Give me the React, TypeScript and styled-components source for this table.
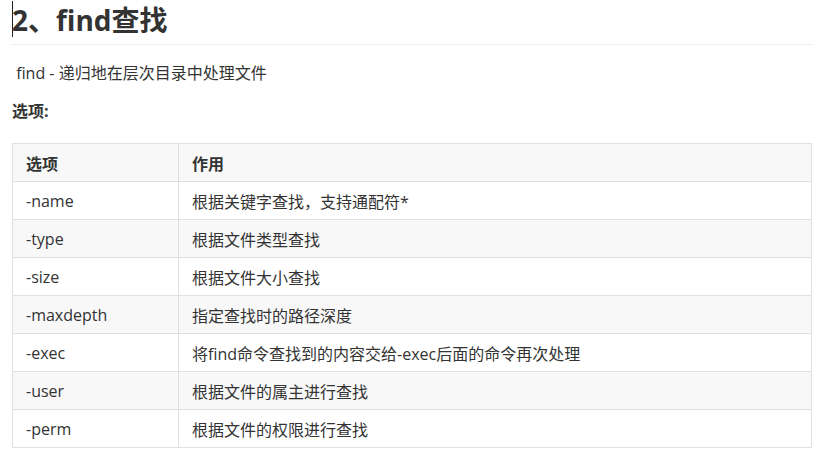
import React from "react";
import styled, { createGlobalStyle } from "styled-components";

const Global = createGlobalStyle`
  html, body {
    margin: 0;
    padding: 0;
    background: #ffffff;
  }
  body {
    font-family: "Open Sans", "Noto Sans CJK SC", sans-serif;
    color: #333333;
    font-size: 16px;
  }
`;

const rows = [
  { opt: "-name", desc: "根据关键字查找，支持通配符*" },
  { opt: "-type", desc: "根据文件类型查找" },
  { opt: "-size", desc: "根据文件大小查找" },
  { opt: "-maxdepth", desc: "指定查找时的路径深度" },
  { opt: "-exec", desc: "将find命令查找到的内容交给-exec后面的命令再次处理" },
  { opt: "-user", desc: "根据文件的属主进行查找" },
  { opt: "-perm", desc: "根据文件的权限进行查找" },
];

const App = () => {
  return (
    <>
      <Global />
      <Page>
        <Heading>
          <Caret />
          2、find查找
        </Heading>
        <Para> find - 递归地在层次目录中处理文件</Para>
        <Label>选项:</Label>
        <Table>
          <thead>
            <Row>
              <Th $first>选项</Th>
              <Th>作用</Th>
            </Row>
          </thead>
          <tbody>
            {rows.map((r) => (
              <Row key={r.opt}>
                <Td $first>{r.opt}</Td>
                <Td>{r.desc}</Td>
              </Row>
            ))}
          </tbody>
        </Table>
      </Page>
    </>
  );
};

export default App;

const Page = styled.div`
  width: 800px;
  padding: 2px 0 0 12px;
`;

const Heading = styled.h2`
  position: relative;
  margin: 0;
  height: 36px;
  line-height: 36px;
  padding-bottom: 6px;
  border-bottom: 1px solid #eeeeee;
  font-size: 28px;
  font-weight: 700;
  color: #333333;
  white-space: nowrap;
`;

const Caret = styled.span`
  position: absolute;
  left: 0;
  top: -1px;
  width: 1px;
  height: 36px;
  background: #222222;
`;

const Para = styled.p`
  margin: 16px 0 0;
  line-height: 24px;
  font-size: 16px;
  white-space: pre;
`;

const Label = styled.p`
  margin: 14px 0 0;
  line-height: 24px;
  font-size: 16px;
  font-weight: 700;
`;

const Table = styled.table`
  margin-top: 20px;
  width: 800px;
  border-collapse: collapse;
  font-size: 16px;
`;

const Row = styled.tr`
  background: #ffffff;
  thead &,
  tbody &:nth-child(2n) {
    background: #f8f8f8;
  }
`;

const Th = styled.th<{ $first?: boolean }>`
  height: 38px;
  padding: 0 13px;
  box-sizing: border-box;
  text-align: left;
  font-weight: 700;
  border: 1px solid #dfdfdf;
  width: ${(p) => (p.$first ? "166px" : "auto")};
`;

const Td = styled.td<{ $first?: boolean }>`
  height: 38px;
  padding: 0 13px;
  box-sizing: border-box;
  border: 1px solid #dfdfdf;
  width: ${(p) => (p.$first ? "166px" : "auto")};
  white-space: nowrap;
`;
